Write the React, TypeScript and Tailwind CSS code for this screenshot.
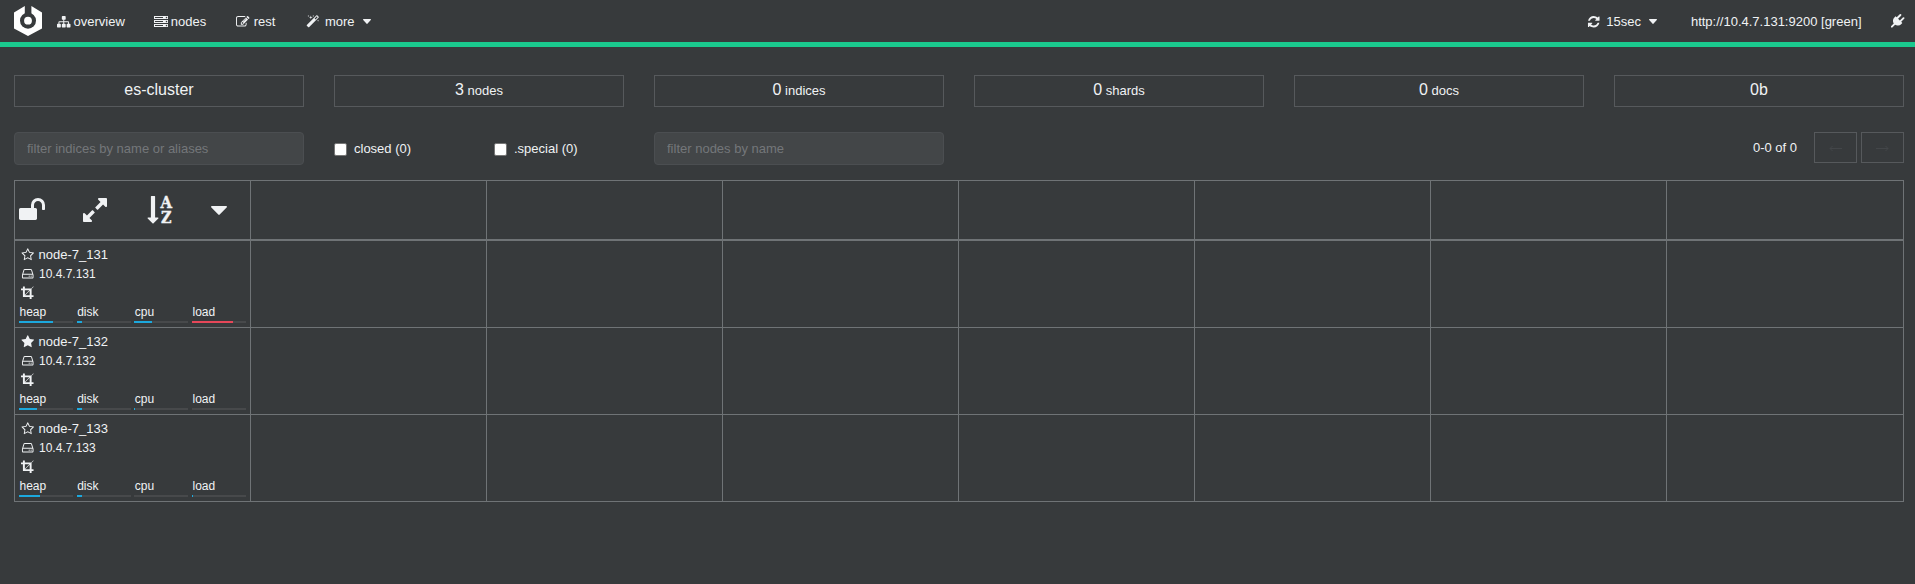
import React from "react";

const PATHS = {
  sitemap:
    "M1792 1248v320q0 40-28 68t-68 28h-320q-40 0-68-28t-28-68v-320q0-40 28-68t68-28h96v-192h-512v192h96q40 0 68 28t28 68v320q0 40-28 68t-68 28h-320q-40 0-68-28t-28-68v-320q0-40 28-68t68-28h96v-192h-512v192h96q40 0 68 28t28 68v320q0 40-28 68t-68 28h-320q-40 0-68-28t-28-68v-320q0-40 28-68t68-28h96v-192q0-52 38-90t90-38h512v-192h-96q-40 0-68-28t-28-68v-320q0-40 28-68t68-28h320q40 0 68 28t28 68v320q0 40-28 68t-68 28h-96v192h512q52 0 90 38t38 90v192h96q40 0 68 28t28 68z",
  server:
    "M128 1408h1024v-128h-1024v128zm0-512h1024v-128h-1024v128zm1568 448q0-40-28-68t-68-28-68 28-28 68 28 68 68 28 68-28 28-68zm-1568-960h1024v-128h-1024v128zm1568 448q0-40-28-68t-68-28-68 28-28 68 28 68 68 28 68-28 28-68zm0-512q0-40-28-68t-68-28-68 28-28 68 28 68 68 28 68-28 28-68zm96 832v384h-1792v-384h1792zm0-512v384h-1792v-384h1792zm0-512v384h-1792v-384h1792z",
  edit: "M888 1184l116-116-152-152-116 116v56h96v96h56zm440-720q-16-16-33 1l-350 350q-17 17-1 33t33-1l350-350q17-17 1-33zm80 594v190q0 119-84.5 203.5t-203.5 84.5h-832q-119 0-203.5-84.5t-84.5-203.5v-832q0-119 84.5-203.5t203.5-84.5h832q63 0 117 25 15 7 18 23 3 17-9 29l-49 49q-14 14-32 8-23-6-45-6h-832q-66 0-113 47t-47 113v832q0 66 47 113t113 47h832q66 0 113-47t47-113v-126q0-13 9-22l64-64q15-15 35-7t20 29zm-96-738l288 288-672 672h-288v-288zm444 132l-92 92-288-288 92-92q28-28 68-28t68 28l152 152q28 28 28 68t-28 68z",
  magic:
    "M1254 581l293-293-107-107-293 293zm447-293q0 27-18 45l-1286 1286q-18 18-45 18t-45-18l-198-198q-18-18-18-45t18-45l1286-1286q18-18 45-18t45 18l198 198q18 18 18 45zm-1351-190l98 30-98 30-30 98-30-98-98-30 98-30 30-98zm350 162l196 60-196 60-60 196-60-196-196-60 196-60 60-196zm930 478l98 30-98 30-30 98-30-98-98-30 98-30 30-98zm-640-640l98 30-98 30-30 98-30-98-98-30 98-30 30-98z",
  refresh:
    "M1639 1056q0 5-1 7-64 268-268 434.5t-478 166.5q-146 0-282.5-55t-243.5-157l-129 129q-19 19-45 19t-45-19-19-45v-448q0-26 19-45t45-19h448q26 0 45 19t19 45-19 45l-137 137q71 66 161 102t187 36q134 0 250-65t186-179q11-17 53-117 8-23 30-23h192q13 0 22.5 9.5t9.5 22.5zm25-800v448q0 26-19 45t-45 19h-448q-26 0-45-19t-19-45 19-45l138-138q-148-137-349-137-134 0-250 65t-186 179q-11 17-53 117-8 23-30 23h-199q-13 0-22.5-9.5t-9.5-22.5v-7q65-268 270-434.5t480-166.5q146 0 284 55.5t245 156.5l130-129q19-19 45-19t45 19 19 45z",
  plug: "M1755 453q37 38 37 90.5t-37 90.5l-401 400 150 150-160 160q-163 163-389.5 186.5t-411.5-100.5l-362 362h-181v-181l362-362q-124-185-100.5-411.5t186.5-389.5l160-160 150 150 400-401q38-37 91-37t90 37 37 90.5-37 90.5l-400 401 234 234 401-400q38-37 91-37t90 37z",
  unlock:
    "M1728 576v256q0 26-19 45t-45 19h-64q-26 0-45-19t-19-45v-256q0-106-75-181t-181-75-181 75-75 181v192h96q40 0 68 28t28 68v576q0 40-28 68t-68 28h-960q-40 0-68-28t-28-68v-576q0-40 28-68t68-28h672v-192q0-185 131.5-316.5t316.5-131.5 316.5 131.5 131.5 316.5z",
  expand:
    "M883 1056q0 13-10 23l-332 332 144 144q19 19 19 45t-19 45-45 19h-448q-26 0-45-19t-19-45v-448q0-26 19-45t45-19 45 19l144 144 332-332q10-10 23-10t23 10l114 114q10 10 10 23zm781-864v448q0 26-19 45t-45 19-45-19l-144-144-332 332q-10 10-23 10t-23-10l-114-114q-10-10-10-23t10-23l332-332-144-144q-19-19-19-45t19-45 45-19h448q26 0 45 19t19 45z",
  starOutline:
    "M1201 1004l306-297-422-62-189-382-189 382-422 62 306 297-73 421 378-199 377 199zm527-357q0 22-26 48l-363 354 86 500q1 7 1 20 0 50-41 50-19 0-40-12l-449-236-449 236q-22 12-40 12-21 0-31.5-14.5t-10.5-35.5q0-6 2-20l86-500-364-354q-25-27-25-48 0-37 56-46l502-73 225-455q19-41 49-41t49 41l225 455 502 73q56 9 56 46z",
  star: "M1728 647q0 22-26 48l-363 354 86 500q1 7 1 20 0 21-10.5 35.5t-30.5 14.5q-19 0-40-12l-449-236-449 236q-22 12-40 12-21 0-31.5-14.5t-10.5-35.5q0-6 2-20l86-500-364-354q-25-27-25-48 0-37 56-46l502-73 225-455q19-41 49-41t49 41l225 455 502 73q56 9 56 46z",
  hdd: "M1168 1216q0 33-23.5 56.5t-56.5 23.5-56.5-23.5-23.5-56.5 23.5-56.5 56.5-23.5 56.5 23.5 23.5 56.5zm256 0q0 33-23.5 56.5t-56.5 23.5-56.5-23.5-23.5-56.5 23.5-56.5 56.5-23.5 56.5 23.5 23.5 56.5zm112 160v-320q0-13-9.5-22.5t-22.5-9.5h-1216q-13 0-22.5 9.5t-9.5 22.5v320q0 13 9.5 22.5t22.5 9.5h1216q13 0 22.5-9.5t9.5-22.5zm-1230-480h1180l-157-482q-4-13-16-21.5t-26-8.5h-782q-14 0-26 8.5t-16 21.5zm1358 160v320q0 66-47 113t-113 47h-1216q-66 0-113-47t-47-113v-320q0-25 16-75l197-606q17-53 63-86t101-33h782q55 0 101 33t63 86l197 606q16 50 16 75z",
  crop: "M557 1216h595v-595zm-45-45l595-595h-595v595zm1152 77v192q0 14-9 23t-23 9h-224v224q0 14-9 23t-23 9h-192q-14 0-23-9t-9-23v-224h-864q-14 0-23-9t-9-23v-864h-224q-14 0-23-9t-9-23v-192q0-14 9-23t23-9h224v-224q0-14 9-23t23-9h192q14 0 23 9t9 23v224h851l246-247q10-9 23-9t23 9q9 10 9 23t-9 23l-247 246v851h224q14 0 23 9t9 23z",
};

type IconName = keyof typeof PATHS;

function Icon({ name, className = "size-[13px]" }: { name: IconName; className?: string }) {
  return (
    <svg viewBox="0 0 1792 1792" fill="currentColor" overflow="visible" className={`shrink-0 ${className}`}>
      <path d={PATHS[name]} />
    </svg>
  );
}

function Caret({ className = "w-2 h-[5px]" }: { className?: string }) {
  return (
    <svg viewBox="0 0 16 9" preserveAspectRatio="none" fill="currentColor" className={`shrink-0 ${className}`}>
      <path d="M1 0h14q1 0 1 .8 0 .4-.4.8L8.7 8.6q-.7.7-1.4 0L.4 1.6Q0 1.200 0 .8 0 0 1 0z" />
    </svg>
  );
}

function SortAlpha() {
  return (
    <svg viewBox="0 0 28 28" fill="currentColor" overflow="visible" className="size-7 shrink-0">
      <path d="M11.500 22q0 .2-.2.4l-5 5q-.3.200-.6 0l-5-5q-.3-.3-.1-.6.1-.3.5-.3h2.800V.5q0-.5.5-.5h3.200q.5 0 .5.500v21h2.800q.6 0 .6.500z" />
      <g fontSize="16" fontWeight="700" fontFamily="'DejaVu Serif', serif" textAnchor="middle" stroke="currentColor" strokeWidth="0.400">
        <text x="19.200" y="11.800" textLength="11.500" lengthAdjust="spacingAndGlyphs">A</text>
        <text x="19.200" y="27.300" textLength="10.500" lengthAdjust="spacingAndGlyphs">Z</text>
      </g>
    </svg>
  );
}

function Arrow({ flip = false }: { flip?: boolean }) {
  return (
    <svg viewBox="0 0 13 7" fill="none" stroke="currentColor" className={`h-[7px] w-[13px] ${flip ? "rotate-180" : ""}`}>
      <path d="M1 3.500h12M3.500 1 1 3.500 3.500 6" />
    </svg>
  );
}

function Logo() {
  return (
    <svg viewBox="0 0 28 30" className="h-[30px] w-7 shrink-0">
      <path d="M0 6.500 10.800 0v8h6.600V0L28 6.500v16L14 30 0 22.500z" fill="#fff" />
      <circle cx="14" cy="14.700" r="8" fill="#373a3c" />
      <circle cx="14" cy="14.700" r="3.900" fill="#fff" />
    </svg>
  );
}

const STATS = [
  { value: "es-cluster", label: "" },
  { value: "3", label: "nodes" },
  { value: "0", label: "indices" },
  { value: "0", label: "shards" },
  { value: "0", label: "docs" },
  { value: "0b", label: "" },
];

const NODES = [
  { name: "node-7_131", ip: "10.4.7.131", master: false, heap: 34, disk: 5, cpu: 18, load: 41, alert: true },
  { name: "node-7_132", ip: "10.4.7.132", master: true, heap: 18, disk: 5, cpu: 1, load: 0, alert: false },
  { name: "node-7_133", ip: "10.4.7.133", master: false, heap: 21, disk: 5, cpu: 0, load: 1, alert: false },
];

const EMPTY = [0, 1, 2, 3, 4, 5, 6];

function Meter({ label, value, alert = false }: { label: string; value: number; alert?: boolean }) {
  return (
    <div className="w-[54px]">
      <div className="h-[16px] pl-[0.5px] text-xs leading-4">{label}</div>
      <div className="mt-px h-[2px] bg-[#47494b]">
        <div className={`h-full ${alert ? "bg-[#e64759]" : "bg-[#1ca8dd]"}`} style={{ width: value }} />
      </div>
    </div>
  );
}

export default function App() {
  return (
    <div className="min-h-[584px] w-full overflow-hidden bg-[#373a3c] font-['Liberation_Sans',Arial,sans-serif] text-[13px] leading-[18px] text-[#f0f2f4]">
      <nav className="flex h-[47px] items-center border-b-[5px] border-[#1ac98e] pl-[14px] pr-[11px]">
        <Logo />
        <a className="ml-[15px] flex items-center gap-[3px] pt-px"><Icon name="sitemap" className="size-[13.5px]" />overview</a>
        <a className="ml-[29px] flex items-center gap-[3px] pt-px"><Icon name="server" className="size-[14px]" />nodes</a>
        <a className="ml-[30px] flex items-center gap-1 pt-px"><Icon name="edit" className="size-[13.5px]" />rest</a>
        <a className="ml-[31px] flex items-center pt-px">
          <Icon name="magic" className="size-[13.5px]" />
          <span className="ml-[5px]">more</span>
          <Caret className="ml-2 h-[5px] w-2" />
        </a>
        <a className="ml-auto flex items-center pt-px">
          <Icon name="refresh" className="size-[13.5px]" />
          <span className="ml-[6px]">15sec</span>
          <Caret className="ml-2 h-[5px] w-2" />
        </a>
        <span className="ml-[34px] pt-px">http://10.4.7.131:9200 [green]</span>
        <Icon name="plug" className="ml-[29px] size-[13.5px]" />
      </nav>

      <main className="w-[1904px] pl-[14px] pt-7">
        <div className="grid grid-cols-6 gap-[30px]">
          {STATS.map((s, i) => (
            <div key={i} className="h-8 border border-[#56595c] text-center text-base leading-[28px]">
              {s.value}
              {s.label && <span className="text-[13px]"> {s.label}</span>}
            </div>
          ))}
        </div>

        <div className="mt-[25px] grid h-[33px] grid-cols-6 gap-[30px]">
          <input
            placeholder="filter indices by name or aliases"
            className="h-[33px] w-full rounded-[4px] border border-[#4b4e51] bg-[#434648] px-3 placeholder:text-[#74777a]"
          />
          <div className="flex h-[33px] items-center">
            <label className="flex w-40 items-center gap-[7px]">
              <span className="mt-[2px] size-[13px] rounded-[2px] border border-[#767676] bg-white" />
              closed (0)
            </label>
            <label className="flex items-center gap-[7px] whitespace-nowrap">
              <span className="mt-[2px] size-[13px] rounded-[2px] border border-[#767676] bg-white" />
              .special (0)
            </label>
          </div>
          <input
            placeholder="filter nodes by name"
            className="h-[33px] w-full rounded-[4px] border border-[#4b4e51] bg-[#434648] px-3 placeholder:text-[#74777a]"
          />
          <div className="col-span-3 flex items-start justify-end">
            <span className="mr-[17px] mt-[7px]">0-0 of 0</span>
            <span className="mr-1 flex h-[31px] w-[43px] items-center justify-center border border-[#56595c] pt-px text-[#434649]"><Arrow /></span>
            <span className="flex h-[31px] w-[43px] items-center justify-center border border-[#56595c] pt-px text-[#434649]"><Arrow flip /></span>
          </div>
        </div>

        <div className="mt-[15px] border-l border-t border-[#6f7376]">
          <div className="grid h-[60px] grid-cols-[repeat(7,236px)_237px] border-b-2 border-[#6f7376]">
            <div className="flex items-center border-r border-[#6f7376] pl-[3px]">
              <Icon name="unlock" className="size-7" />
              <Icon name="expand" className="ml-[35px] size-7" />
              <div className="ml-[38px]"><SortAlpha /></div>
              <Caret className="ml-9 h-[9px] w-4" />
            </div>
            {EMPTY.map((c) => (
              <div key={c} className="border-r border-[#6f7376]" />
            ))}
          </div>
          {NODES.map((n) => (
            <div key={n.name} className="grid h-[87px] grid-cols-[repeat(7,236px)_237px] border-b border-[#6f7376]">
              <div className="border-r border-[#6f7376] pl-1 pr-1 pt-[4px]">
                <div className="flex h-[19px] items-center gap-1 pl-[2px]">
                  <Icon name={n.master ? "star" : "starOutline"} className="size-[13.5px]" />
                  {n.name}
                </div>
                <div className="flex h-[19px] items-center gap-1 pl-[2px] text-xs">
                  <Icon name="hdd" className="size-[13.5px]" />
                  <span className="pl-[0.5px]">{n.ip}</span>
                </div>
                <div className="flex h-[21px] items-start pl-[2px] pt-[3px]">
                  <Icon name="crop" className="size-[13.5px]" />
                </div>
                <div className="flex justify-between">
                  <Meter label="heap" value={n.heap} />
                  <Meter label="disk" value={n.disk} />
                  <Meter label="cpu" value={n.cpu} />
                  <Meter label="load" value={n.load} alert={n.alert} />
                </div>
              </div>
              {EMPTY.map((c) => (
                <div key={c} className="border-r border-[#6f7376]" />
              ))}
            </div>
          ))}
        </div>
      </main>
    </div>
  );
}
